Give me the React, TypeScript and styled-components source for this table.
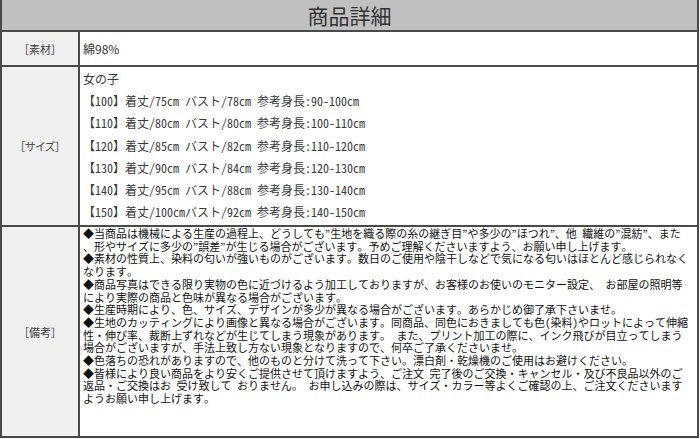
import React from "react";
import styled, { createGlobalStyle } from "styled-components";

const Global = createGlobalStyle`
  html, body { margin: 0; padding: 0; background: #ffffff; }
  body { font-family: "Noto Sans CJK JP", "Noto Sans", sans-serif; }
`;

const Frame = styled.div`
  width: 700px;
  height: 439px;
  box-sizing: border-box;
  background: #f4f4f4;
`;

const Table = styled.div`
  width: 699px;
  box-sizing: border-box;
  border-left: 2px solid #4a4a4a;
  border-right: 2px solid #4a4a4a;
  border-bottom: 2px solid #4a4a4a;
  display: grid;
  grid-template-columns: 78px 1fr;
  background: #ffffff;
`;

const Header = styled.div`
  grid-column: 1 / -1;
  height: 30px;
  background: #c0c0c0;
  border-bottom: 2px solid #4a4a4a;
  display: flex;
  align-items: center;
  justify-content: center;
  font-size: 21px;
  color: #333333;
  letter-spacing: 0px;
`;

const Label = styled.div<{ $bottom?: boolean }>`
  background: #f0f0f0;
  border-right: 2px solid #4a4a4a;
  border-bottom: ${(p) => (p.$bottom ? "0" : "2px solid #4a4a4a")};
  display: flex;
  align-items: center;
  justify-content: center;
  font-size: 11px;
  color: #444444;
  font-feature-settings: "palt";
`;

const Cell = styled.div<{ $h: number; $bottom?: boolean; $pt?: number }>`
  height: ${(p) => p.$h}px;
  box-sizing: border-box;
  border-bottom: ${(p) => (p.$bottom ? "0" : "2px solid #4a4a4a")};
  padding: ${(p) => p.$pt ?? 0}px 0 0 3px;
  overflow: hidden;
`;

const Single = styled.div`
  height: 100%;
  display: flex;
  align-items: center;
  font-size: 12px;
  color: #333333;
`;

const SizeLine = styled.div`
  font-family: "Noto Sans Mono CJK JP", "Noto Sans CJK JP", monospace;
  font-size: 12px;
  line-height: 22.2px;
  color: #3a3a3a;
  white-space: nowrap;
`;

const NoteLine = styled.div`
  font-family: "Noto Sans Mono CJK JP", "Noto Sans CJK JP", monospace;
  font-size: 11px;
  line-height: 12.7px;
  color: #111111;
  white-space: nowrap;
`;

const sizes = [
  "女の子",
  "【100】着丈/75cm バスト/78cm 参考身長:90-100cm",
  "【110】着丈/80cm バスト/80cm 参考身長:100-110cm",
  "【120】着丈/85cm バスト/82cm 参考身長:110-120cm",
  "【130】着丈/90cm バスト/84cm 参考身長:120-130cm",
  "【140】着丈/95cm バスト/88cm 参考身長:130-140cm",
  "【150】着丈/100cmバスト/92cm 参考身長:140-150cm",
];

const notes = [
  "◆当商品は機械による生産の過程上、どうしても”生地を織る際の糸の継ぎ目”や多少の”ほつれ”、他 繊維の”混紡”、また",
  "、形やサイズに多少の”誤差”が生じる場合がございます。予めご理解くださいますよう、お願い申し上げます。",
  "◆素材の性質上、染料の匂いが強いものがございます。数日のご使用や陰干しなどで気になる匂いはほとんど感じられなく",
  "なります。",
  "◆商品写真はできる限り実物の色に近づけるよう加工しておりますが、お客様のお使いのモニター設定、 お部屋の照明等",
  "により実際の商品と色味が異なる場合がございます。",
  "◆生産時期により、色、サイズ、デザインが多少が異なる場合がございます。あらかじめ御了承下さいませ。",
  "◆生地のカッティングにより画像と異なる場合がございます。同商品、同色におきましても色(染料)やロットによって伸縮",
  "性・伸び率、裁断上ずれなどが生じてしまう現象があります。 また、プリント加工の際に、インク飛びが目立ってしまう",
  "場合がございますが、手法上致し方ない現象となりますので、何卒ご了承くださいませ。",
  "◆色落ちの恐れがありますので、他のものと分けて洗って下さい。漂白剤・乾燥機のご使用はお避けください。",
  "◆皆様により良い商品をより安くご提供させて頂けますよう、ご注文 完了後のご交換・キャンセル・及び不良品以外のご",
  "返品・ご交換はお 受け致して おりません。 お申し込みの際は、サイズ・カラー等よくご確認の上、ご注文くださいます",
  "ようお願い申し上げます。",
];

export default function App() {
  return (
    <Frame>
      <Global />
      <Table>
        <Header>商品詳細</Header>
        <Label>［素材］</Label>
        <Cell $h={35}>
          <Single>綿98%</Single>
        </Cell>
        <Label>［サイズ］</Label>
        <Cell $h={160} $pt={1}>
          {sizes.map((s) => (
            <SizeLine key={s}>{s}</SizeLine>
          ))}
        </Cell>
        <Label $bottom>［備考］</Label>
        <Cell $h={209} $bottom>
          {notes.map((n) => (
            <NoteLine key={n}>{n}</NoteLine>
          ))}
        </Cell>
      </Table>
    </Frame>
  );
}
